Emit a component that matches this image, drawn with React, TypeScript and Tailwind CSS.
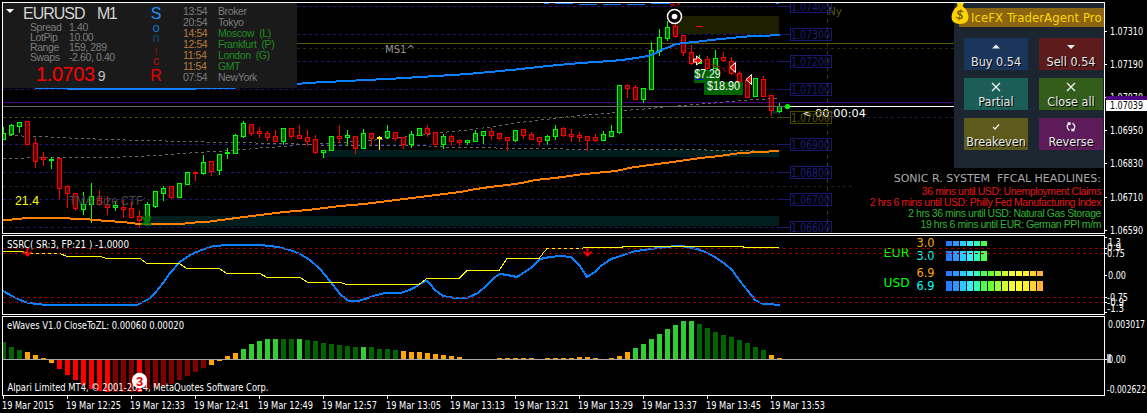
import React from 'react';

type Candle = [string, number, number, number, number]; // kind, high, bodyTop, bodyBottom, low

const STEP = 8;
const X0 = 3;

const candles: Candle[] = [
    ['g', 127, 133, 139, 139], ['g', 124, 125, 134, 135], ['g', 122, 122, 126, 132], ['r', 121, 121, 144, 144],
    ['r', 138, 143, 161, 167], ['r', 152, 157, 159, 165], ['g', 157, 159, 160, 168], ['r', 158, 158, 188, 198],
    ['r', 185, 186, 193, 207], ['r', 193, 193, 208, 210], ['g', 192, 204, 209, 214], ['g', 183, 196, 204, 222],
    ['r', 190, 198, 204, 205], ['r', 196, 204, 207, 214], ['g', 202, 205, 207, 210], ['r', 200, 207, 209, 217],
    ['r', 202, 208, 217, 217], ['r', 210, 216, 220, 227], ['g', 202, 204, 220, 220], ['g', 191, 191, 206, 207],
    ['g', 186, 188, 193, 200], ['r', 186, 186, 197, 198], ['g', 183, 183, 197, 197], ['g', 172, 172, 184, 184],
    ['r', 171, 172, 173, 180], ['g', 155, 162, 173, 174], ['r', 161, 161, 171, 175], ['g', 154, 154, 170, 174],
    ['g', 148, 152, 153, 158], ['g', 134, 135, 153, 153], ['g', 121, 123, 136, 137], ['r', 124, 124, 133, 135],
    ['r', 127, 131, 133, 137], ['r', 131, 133, 137, 140], ['r', 130, 136, 141, 141], ['g', 128, 128, 141, 144],
    ['r', 128, 128, 136, 138], ['r', 125, 135, 138, 138], ['r', 130, 137, 141, 145], ['r', 135, 139, 152, 153],
    ['g', 150, 150, 152, 157], ['g', 136, 136, 150, 150], ['r', 125, 136, 138, 142], ['g', 130, 135, 137, 145],
    ['r', 136, 136, 148, 153], ['g', 129, 133, 148, 148], ['r', 133, 133, 138, 144], ['y', 136, 137, 138, 149],
    ['g', 125, 131, 137, 138], ['r', 132, 132, 138, 140], ['r', 137, 137, 144, 148], ['g', 131, 134, 144, 147],
    ['g', 128, 128, 135, 135], ['r', 125, 128, 133, 136], ['r', 132, 132, 144, 144], ['g', 134, 136, 144, 148],
    ['r', 135, 136, 141, 145], ['r', 139, 140, 142, 145], ['g', 140, 140, 142, 144], ['g', 130, 133, 141, 141],
    ['g', 131, 131, 135, 143], ['r', 128, 131, 135, 139], ['r', 133, 133, 138, 139], ['r', 137, 137, 140, 150],
    ['g', 130, 130, 140, 141], ['r', 129, 129, 135, 138], ['r', 132, 134, 139, 139], ['r', 137, 137, 141, 145],
    ['g', 135, 136, 140, 144], ['g', 125, 129, 136, 139], ['r', 127, 128, 135, 136], ['r', 129, 134, 136, 141],
    ['r', 132, 135, 137, 141], ['r', 136, 136, 140, 150], ['r', 134, 137, 140, 141], ['g', 131, 134, 140, 140],
    ['g', 125, 131, 136, 136], ['g', 85, 85, 132, 133], ['r', 84, 85, 88, 97], ['r', 85, 87, 99, 99],
    ['g', 88, 88, 99, 102], ['g', 42, 50, 89, 89], ['g', 29, 37, 51, 55], ['g', 21, 27, 38, 40],
    ['r', 20, 26, 36, 37], ['r', 35, 35, 52, 55], ['r', 45, 52, 63, 64], ['g', 55, 60, 63, 63],
    ['r', 56, 59, 68, 69], ['g', 50, 58, 68, 68], ['r', 52, 57, 60, 61], ['r', 57, 61, 73, 74],
    ['r', 71, 73, 81, 82], ['r', 80, 80, 97, 97], ['g', 78, 78, 96, 96], ['r', 76, 79, 96, 96],
    ['r', 95, 95, 110, 115], ['g', 103, 106, 111, 112],
];

const stroke: Record<string, string> = { g: '#00ff00', r: '#ff0000', y: '#ffff00' };
const fill: Record<string, string> = { g: '#006400', r: '#640000', y: '#ffff00' };

// histogram: kind + bar end, the zero line is at 359
const waves: [string, number][] = [
    ['d', 342], ['d', 347], ['d', 350], ['o', 352], ['o', 355], ['o', 358], ['o', 363], ['r', 369],
    ['r', 375], ['r', 380], ['r', 385], ['r', 389], ['r', 391], ['r', 392], ['m', 392], ['m', 392],
    ['m', 392], ['r', 392], ['m', 390], ['m', 388], ['m', 386], ['m', 384], ['m', 380], ['m', 376],
    ['m', 372], ['m', 368], ['o', 365], ['o', 361], ['o', 356], ['o', 353], ['g', 349], ['g', 344],
    ['g', 341], ['g', 339], ['g', 339], ['d', 339], ['d', 339], ['g', 339], ['d', 340], ['d', 341],
    ['d', 343], ['d', 344], ['d', 345], ['d', 346], ['d', 347], ['g', 347], ['d', 347], ['d', 349],
    ['d', 349], ['d', 350], ['o', 351], ['o', 352], ['o', 352], ['o', 353], ['o', 354], ['o', 355],
    ['o', 356], ['o', 357], ['o', 359], ['o', 359], ['o', 359], ['o', 359], ['o', 358], ['o', 358],
    ['o', 358], ['o', 358], ['o', 358], ['o', 359], ['o', 358], ['o', 358], ['o', 358], ['o', 358],
    ['o', 357], ['o', 357], ['o', 358], ['o', 359], ['o', 358], ['o', 356], ['o', 352], ['g', 348],
    ['g', 344], ['g', 339], ['g', 334], ['g', 329], ['g', 325], ['g', 321], ['g', 321], ['d', 324],
    ['d', 328], ['d', 332], ['d', 335], ['d', 337], ['d', 340], ['d', 343], ['d', 347], ['d', 350],
    ['o', 355], ['o', 358],
];
const waveColor: Record<string, string> = { g: '#32cd32', d: '#006400', o: '#ffa500', r: '#ff0000', m: '#800000' };

const levels = [
    { y: 6, label: '1.07400' }, { y: 34, label: '1.07300' }, { y: 61, label: '1.07200' },
    { y: 89, label: '1.07100' }, { y: 117, label: '1.07000' }, { y: 144, label: '1.06900' },
    { y: 172, label: '1.06800' }, { y: 199, label: '1.06700' }, { y: 227, label: '1.06600' },
];

const priceTicks: [number, string][] = [
    [31, '1.07310'], [64, '1.07190'], [97, '1.07070'], [130, '1.06950'], [163, '1.06830'], [197, '1.06710'], [230, '1.06590'],
];

const times = ['2015', '12:25', '12:33', '12:41', '12:49', '12:57', '13:05', '13:13', '13:21', '13:29', '13:37', '13:45', '13:53'];

const clocks: [string, string, boolean][] = [
    ['13:54', 'Broker', false], ['20:54', 'Tokyo', false], ['14:54', 'Moscow  (L)', true], ['12:54', 'Frankfurt  (P)', true],
    ['11:54', 'London  (G)', true], ['11:54', 'GMT', true], ['07:54', 'NewYork', false],
];

const meter = ['#2b7bff', '#2f98ff', '#2fc8ff', '#30f0ff', '#30ffb4', '#4dff4d', '#66ff33', '#a0ff33', '#d2ff33', '#f2fa33', '#ffff33', '#fff033', '#ffd233', '#ffb133'];

const TAHOMA = '"DejaVu Sans Condensed", "DejaVu Sans", sans-serif';
const VERDANA = '"DejaVu Sans", sans-serif';
const ARIAL = '"Liberation Sans", sans-serif';

const Label = ({ x, y, w, size = 11, color = '#fff', font = TAHOMA, children }: {
    x: number; y: number; w?: number; size?: number; color?: string; font?: string; children: string;
}) => (
    <text x={x} y={y} textLength={w} lengthAdjust="spacingAndGlyphs" fontSize={size} fill={color} fontFamily={font} xmlSpace="preserve">
        {children}
    </text>
);

const Dash = ({ y, color, x2 = 1104, x1 = 3 }: { y: number; color: string; x2?: number; x1?: number }) => (
    <line x1={x1} x2={x2} y1={y + 0.5} y2={y + 0.5} stroke={color} strokeDasharray="3 3" />
);

const Curve = ({ points, color, width = 1, dash }: { points: string; color: string; width?: number; dash?: string }) => (
    <polyline points={points} fill="none" stroke={color} strokeWidth={width} strokeDasharray={dash} shapeRendering="crispEdges" />
);

const PriceChart = () => (
    <svg className="block h-full w-full" viewBox="3 3 1101 230">
        <g shapeRendering="crispEdges">
            <rect x="324" y="150" width="455" height="7" fill="#001e1e" />
            <rect x="147" y="216" width="632" height="10" fill="#001e1e" />
            <rect x="672" y="16" width="107" height="18" fill="#1e1e00" />
            <rect x="771" y="111" width="8" height="3" fill="#002828" />
            {levels.map(l => (
                <g key={l.y}>
                    <Dash y={l.y} x2={779} color={l.y === 117 ? '#4b4b00' : '#191970'} />
                    <rect x="779" y={l.y} width="12" height="1" fill={l.y === 117 ? '#4b4b00' : '#191970'} />
                </g>
            ))}
            <Dash y={117} x1={831} color="#1e1e3c" />
            <Dash y={48} color="#32230f" />
            <Dash y={186} x2={852} color="#28200f" />
            <line x1="827.5" x2="827.5" y1="3" y2="233" stroke="#3c3c0a" strokeDasharray="4 4" />
            <rect x="3" y="43" width="1101" height="1" fill="#5a5a00" />
            <rect x="3" y="102" width="1101" height="1" fill="#4b0082" />
        </g>

        <Curve dash="3 3" color="#696969" points="3,135.5 40,136.5 60,137.5 80,138.5 110,139.5 140,140.5 190,141.5 220,142.5 255,142.5 257,143.5 295,143.5 300,144.5 340,145.5 385,145.5 420,145.5 455,147.5 495,147.5 497,148.5 565,148.5 567,149.5 680,149.5 730,150.5 778,151.5" />
        <Curve dash="3 3" color="#696969" points="3,158.5 25,158.5 28,157.5 110,157.5 130,156.5 160,155.5 180,153.5 200,152.5 215,151.5 245,149.5 265,147.5 285,146.5 300,144.5 325,143.5 340,142.5 360,141.5 380,139.5 400,137.5 420,135.5 440,132.5 455,131.5 480,128.5 500,125.5 520,122.5 545,119.5 570,116.5 590,114.5 610,113.5 625,110.5 650,108.5 680,105.5 710,103.5 740,100.5 778,98.5" />

        <g shapeRendering="crispEdges">
            {candles.map(([k, hi, top, bot, lo], i) => {
                const x = X0 + i * STEP;
                return (
                    <g key={i}>
                        <rect x={x} y={hi} width="1" height={lo - hi + 1} fill={stroke[k]} />
                        <rect x={x - 2} y={top} width="5" height={bot - top + 1} fill={stroke[k]} />
                        {bot - top > 1 && <rect x={x - 1} y={top + 1} width="3" height={bot - top - 1} fill={fill[k]} />}
                    </g>
                );
            })}
            <rect x="3" y="106" width="784" height="1" fill="#696969" />
            <rect x="787" y="106" width="317" height="1" fill="#fff" />
            <rect x="35" y="88" width="193" height="1" fill="#1080ff" />
            <rect x="67" y="88" width="129" height="2" fill="#1080ff" />
            <path d="M544 3.5h5M555 3.5h18M579 4.5h18M603 4.5h18M627 4.5h18M651 3.5h22M776 3.5h3" stroke="#1080ff" />
            <path d="M670 3.5h4M671 4.5h4M677 3.5h3" stroke="#8b0000" strokeWidth="2" />
        </g>
        <Curve width={2} color="#0a80ff" points="228,88 297,84 308,83 324,82 348,81 364,80 388,79 404,78 420,77 436,76 452,75 468,74 484,72.5 500,71 516,69.5 530,68 548,66 564,64.5 580,63 596,62 610,61 622,60 636,58 648,56 655,53.5 661,50 668,47.5 675,44.5 683,43 695,42 707,40.5 720,39 732,38 740,37 755,36 770,35.5 780,34.5" />
        <Curve width={2} color="#ff8000" points="3,220 12,219.5 22,218.5 35,218 65,218 75,219 90,219.5 107,221 123,222 139,224 180,224 195,222.5 210,221.5 225,219.5 240,217.5 252,216 268,214 284,212 308,210 324,208 340,206 364,204 388,201 412,198 440,194.5 460,192 476,189 490,187 508,185 522,183 535,180 555,178 580,174.5 600,172.5 616,171 632,167.5 650,165 665,163 680,161 700,158 720,156 740,153 760,152 779,151" />

        <path d="M142 217l9 8M151 217l-9 8M146.500 215v11" stroke="#007800" strokeWidth="2.500" />
        <path d="M701 61l45 18M711 64l18 6" stroke="#b40000" strokeDasharray="3 3" fill="none" />
        <path d="M693.500 59h3v-3l5.500 4.500-5.500 4.500v-3h-3z" fill="#f00" stroke="#fff" />
        <path d="M735.500 62.500v10l-5.500-5z M751.500 74.500v10l-5.500-5z" fill="#f00" stroke="#fff" />
        <rect x="696" y="26" width="7" height="1" fill="#f00" />
        <circle cx="674.500" cy="16.500" r="7" fill="#000" stroke="#fff" strokeWidth="1.500" />
        <circle cx="674.500" cy="16.500" r="2.800" fill="#fff" />
        <rect x="694" y="70" width="26" height="13" fill="#006400" />
        <rect x="704" y="82" width="39" height="13" fill="#006400" />
        <rect x="696" y="79" width="7" height="1" fill="#00f" />
        <Label x={694.5} y={78} w={26} size={12} font={ARIAL}>$7.29</Label>
        <Label x={707} y={90} w={33} size={12} font={ARIAL}>$18.90</Label>
        <circle cx="787.500" cy="106.500" r="2.600" fill="#0f0" />

        <Label x={385} y={53} w={30} color="#969696" font={VERDANA}>MS1^</Label>
        <Label x={15} y={205} w={24} size={13} color="#ffff00" font={ARIAL}>21.4</Label>
        <Label x={69} y={205} w={77} size={13} color="#4b4b4b" font={ARIAL}>TMA Size CTF:</Label>
        <Label x={828} y={15} w={14} color="#5a5a0f" font={VERDANA}>Ny</Label>
        <Label x={802} y={117} w={64} font={VERDANA}>{'< 00:00:04'}</Label>

        {levels.map(l => (
            <g key={l.label}>
                <rect x="790.500" y={l.y - 5.5} width="41" height="12" fill="none" stroke={l.y === 117 ? '#4b4b00' : '#191970'} shapeRendering="crispEdges" />
                <Label x={791} y={l.y + 5} w={39} size={11.5} color={l.y === 117 ? '#5a5a00' : '#1d1d7c'} font={VERDANA}>{l.label}</Label>
            </g>
        ))}
    </svg>
);

const Strength = ({ name, value, y, count }: { name: string; value: string; y: number; count: number }) => (
    <g>
        <Label x={883.5} y={y + 16} w={26} size={13} color="#00ff00" font={VERDANA}>{name}</Label>
        <Label x={916.5} y={y + 6} w={18} size={12} color="#ffa500" font={VERDANA}>{value}</Label>
        <Label x={916.5} y={y + 19} w={18} size={12} color="#00ffff" font={VERDANA}>{value}</Label>
        {meter.slice(0, count).map((c, i) => (
            <g key={c}>
                <rect x={946 + i * 7} y={y} width="6" height="5" fill={c} />
                <rect x={946 + i * 7} y={y + 10} width="6" height="10" fill={c} />
            </g>
        ))}
    </g>
);

const SsrcChart = () => (
    <svg className="block h-full w-full" viewBox="3 236 1101 78">
        <Curve width={2} color="#0a80ff" points="3,291 12,296 20,300 28,303 42,304.500 138,304.500 148,299.500 155,293 163,283 170,273 180,262 190,255 200,250.500 212,246.500 225,245 260,245 278,247 290,250 300,254 310,260 320,269 330,281 340,294 348,300.500 360,300.500 368,298 375,295.500 385,293 402,292.500 412,289 420,284 427,280.500 435,290 443,296 455,298 467,298 478,293 487,285 495,277 500,274 507,275 517,277 525,272 532,267 540,259 550,257 560,256 571,257 580,266 587,277 595,272 600,266.500 611,259 622,255.500 634,251.500 650,249 662,247.500 675,246 682,246 697,249 705,252 715,257 725,264 732,270 740,281 748,291 755,300 762,303.500 780,305" />
        <Curve color="#ffff00" points="3,251.500 22,251.500 28,253.500 60,253.500 67,256.500 100,256.500 107,258.500 140,258.500 147,263.500 179,263.500 187,268.500 219,268.500 227,273.500 260,273.500 267,277.500 300,277.500 308,282.500 340,282.500 347,284.500 419,284.500 427,278.500 459,278.500 467,270.500 499,270.500 507,258.500 539,258.500 547,248.500 582,248.500 584,247.500 622,247.500 623,246.500 743,246.500 744,247.500 779,247.500" />
        <Strength name="EUR" value="3.0" y={241} count={6} />
        <Strength name="USD" value="6.9" y={271} count={14} />
        <g shapeRendering="crispEdges">
            {[248, 253, 297, 302].map(y => <Dash key={y} y={y} color="#8b0000" />)}
        </g>
        <path d="M27.500 248v8M23.500 251.500l4 4.200 4-4.200M587.500 248v8M583.500 251.500l4 4.200 4-4.200" stroke="#f00" strokeWidth="1.800" fill="none" />
        <Label x={7} y={248} w={122}>SSRC( SR:3, FP:21 ) -1.0000</Label>
    </svg>
);

const WavesChart = () => (
    <svg className="block h-full w-full" viewBox="3 317 1101 78">
        <g shapeRendering="crispEdges">
            {waves.map(([k, end], i) => (
                <rect key={i} x={X0 - 2 + i * STEP} y={Math.min(end, 359)} width="5" height={Math.abs(359 - end)} fill={waveColor[k]} />
            ))}
            <rect x="3" y="359" width="1101" height="1" fill="#a9a9a9" />
        </g>
        <Label x={7} y={329} w={177}>eWaves V1.0 CloseToZL: 0.00060 0.00020</Label>
        <Label x={7.5} y={391} w={261}>Alpari Limited MT4, © 2001-2014, MetaQuotes Software Corp.</Label>
        <circle cx="139.500" cy="380.500" r="7.700" fill="#fff" />
        <text x="139.500" y="385.500" textAnchor="middle" fontSize="13" fontWeight="bold" fill="#e00" fontFamily={ARIAL}>3</text>
    </svg>
);

const PriceAxis = () => (
    <svg className="block" width="42" height="232" viewBox="1105 2 42 232">
        {priceTicks.map(([y, t]) => (
            <g key={t}>
                <rect x="1105" y={y} width="2" height="1" fill="#fff" />
                <Label x={1110} y={y + 4} w={33} size={10.5}>{t}</Label>
            </g>
        ))}
        <rect x="1106" y="96" width="41" height="4" fill="#4b0082" />
        <rect x="1106" y="100" width="41" height="11" fill="#fff" />
        <Label x={1110} y={109.3} w={33} size={10.5} color="#000">1.07039</Label>
    </svg>
);

const SsrcAxis = () => (
    <svg className="block" width="42" height="80" viewBox="1105 235 42 80">
        <path d="M1105 237.500h2M1105 248.500h2M1105 253.500h2M1105 275.500h2M1105 297.500h2M1105 302.500h2M1105 312.500h2" stroke="#fff" />
        <Label x={1108} y={246} w={13} size={10.5}>1.3</Label>
        <Label x={1107} y={251} w={14} size={10.5}>0.9</Label>
        <Label x={1107} y={257} w={18} size={10.5}>0.75</Label>
        <Label x={1108} y={278.5} w={18} size={10.5}>0.00</Label>
        <Label x={1107} y={301} w={21} size={10.5}>-0.75</Label>
        <Label x={1107} y={306} w={17} size={10.5}>-0.9</Label>
        <Label x={1107} y={311.5} w={17} size={10.5}>-1.3</Label>
    </svg>
);

const WavesAxis = () => (
    <svg className="block" width="42" height="80" viewBox="1105 316 42 80">
        <rect x="1105" y="359" width="2" height="1" fill="#fff" />
        <rect x="1107" y="354" width="4" height="9" fill="#a9a9a9" />
        <Label x={1108} y={328} w={37} size={10.5}>0.003017</Label>
        <Label x={1108} y={362.5} w={18} size={10.5}>0.00</Label>
        <Label x={1107} y={393} w={39} size={10.5}>-0.002622</Label>
    </svg>
);

const InfoPanel = () => (
    <div className="absolute left-0 top-0 flex h-[85px] w-[294px] overflow-hidden bg-[#1a1a1a] font-['Liberation_Sans',sans-serif] text-[#7d7d7d]">
        <svg className="ml-[3px] mt-[6px] block shrink-0" width="8" height="5"><path d="M0 0h8L4 4z" fill="#fff" /></svg>
        <div className="w-[134px] shrink-0 pl-[9px]">
            <div className="flex h-[19px] gap-[12px] whitespace-nowrap text-[16px] leading-[22px] text-[#d3d3d3]">
                <span className="w-[62px] tracking-[-1px]">EURUSD</span>
                <span className="tracking-[-1.500px]">M1</span>
            </div>
            <div className="grid grid-cols-[39px_1fr] pl-[7px] text-[10.5px] leading-[10px] tracking-[-0.4px]">
                <span>Spread</span><span>1.40</span>
                <span>LotPip</span><span>10.00</span>
                <span>Range</span><span>159, 289</span>
                <span>Swaps</span><span>-2.60, 0.40</span>
            </div>
            <div className="flex items-baseline gap-[3px] pl-[13px] leading-[25px]">
                <span className="text-[20px] tracking-[-0.4px] text-[#ff0000]">1.0703</span>
                <span className="text-[14px] text-[#c0c0c0]">9</span>
            </div>
        </div>
        <div className="flex w-[14px] shrink-0 flex-col items-center pl-[2px]">
            <span className="h-[15px] text-[16px] leading-[22px] text-[#1e90ff]">S</span>
            <span className="h-[11px] text-[13px] leading-[16px] pt-[2px] text-[#1775c8]">o</span>
            <span className="h-[13px] text-[13px] leading-[16px] pt-[1px] text-[#0f4a6e]">n</span>
            <span className="h-[11px] text-[13px] leading-[16px] pt-[1px] text-[#7d1010]">i</span>
            <span className="h-[13px] text-[13px] leading-[16px] text-[#b40a0a]">c</span>
            <span className="text-[16px] leading-[20px] text-[#f00000]">R</span>
        </div>
        <div className="grid grid-cols-[35px_1fr] content-start whitespace-pre pl-[21px] pt-[3px] text-[10.5px] leading-[11px] tracking-[-0.4px]">
            {clocks.map(([t, city, open]) => (
                <React.Fragment key={city}>
                    <span className={open ? 'text-[#b87a3c]' : ''}>{t}</span>
                    <span className={open ? 'text-[#228b22]' : ''}>{city}</span>
                </React.Fragment>
            ))}
        </div>
    </div>
);

const icons: Record<string, React.ReactNode> = {
    up: <path d="M2 7.500h8L6 3.500z" fill="#eee" />,
    down: <path d="M2 4h8L6 8z" fill="#eee" />,
    close: <path d="M2 2l8 8M10 2L2 10" stroke="#eee" strokeWidth="1.400" />,
    check: <path d="M3 6l2 2 4-4.500" stroke="#eee" strokeWidth="1.300" fill="none" />,
    swap: <path d="M4.500 2Q0 5.500 4.500 9.500M2.500 2h2.500v2M7.500 9.500Q12 6 7.500 2M9.500 9.500H7v-2" stroke="#eee" strokeWidth="1.300" fill="none" />,
};

const TradeButton = ({ icon, text, color }: { icon: string; text: string; color: string }) => (
    <button className={`flex h-8 w-16 flex-col items-center whitespace-nowrap pt-[3px] text-[12.5px] leading-[17px] text-[#e8e8e8] [text-shadow:1px_1px_0_#000] ${color}`}>
        <svg className="block shrink-0" width="12" height="12">{icons[icon]}</svg>
        {text}
    </button>
);

const TraderPanel = () => (
    <div className="absolute right-0 top-0 h-[165px] w-[150px] bg-[#1b2630] pt-[5px] font-['DejaVu_Sans_Condensed','DejaVu_Sans',sans-serif]">
        <div className="ml-[5px] h-[19px] whitespace-nowrap bg-[#8b6510] pl-[12px] text-[13px] leading-[19px] tracking-[0.08px] text-[#ffd700]">
            IceFX TraderAgent Pro
        </div>
        <svg className="absolute -left-[3px] top-0" width="18" height="22">
            <path d="M6 0h7l-1.500 3q6 5 6 11q0 7-8.500 7t-8.500-7q0-6 6-11z" fill="#ffd200" />
            <text x="9" y="16" textAnchor="middle" fontSize="13" fill="#4b3c00" fontFamily={VERDANA} transform="rotate(12 9 11)">$</text>
        </svg>
        <div className="grid grid-cols-[64px_64px] gap-x-[11px] gap-y-2 pl-[10px] pt-[11px]">
            <TradeButton icon="up" text="Buy 0.54" color="bg-[#1b365d]" />
            <TradeButton icon="down" text="Sell 0.54" color="bg-[#5d1b1b]" />
            <TradeButton icon="close" text="Partial" color="bg-[#1b5d57]" />
            <TradeButton icon="close" text="Close all" color="bg-[#345d1b]" />
            <TradeButton icon="check" text="Breakeven" color="bg-[#5d5a1b]" />
            <TradeButton icon="swap" text="Reverse" color="bg-[#5d1b5a]" />
        </div>
    </div>
);

const Headlines = () => (
    <div className="absolute bottom-0 right-[3px] h-[62px] whitespace-pre text-right font-['Liberation_Sans',sans-serif] text-[10.5px] leading-[11px] tracking-[-0.43px]">
        <p className="h-[15px] font-['DejaVu_Sans',sans-serif] text-[11px] leading-[16px] tracking-normal text-[#a9a9a9]">SONIC R. SYSTEM  FFCAL HEADLINES:</p>
        <p className="text-[#e01818]">36 mins until USD: Unemployment Claims</p>
        <p className="text-[#e01818]">2 hrs 6 mins until USD: Philly Fed Manufacturing Index</p>
        <p className="text-[#32b432]">2 hrs 36 mins until USD: Natural Gas Storage</p>
        <p className="text-[#32b432]">19 hrs 6 mins until EUR: German PPI m/m</p>
    </div>
);

const App: React.FC = () => {
    return (
        <div className="flex h-[413px] w-[1147px] flex-col gap-px overflow-hidden bg-black pl-[2px] pt-[2px]">
            <section className="flex h-[232px] shrink-0">
                <div className="relative w-[1103px] shrink-0 border border-white">
                    <PriceChart />
                    <InfoPanel />
                    <TraderPanel />
                    <Headlines />
                </div>
                <PriceAxis />
            </section>
            <section className="flex h-[80px] shrink-0">
                <div className="w-[1103px] shrink-0 border border-white"><SsrcChart /></div>
                <SsrcAxis />
            </section>
            <section>
                <div className="flex h-[80px]">
                    <div className="w-[1103px] shrink-0 border border-white"><WavesChart /></div>
                    <WavesAxis />
                </div>
                <div className="flex h-[17px] pl-px">
                    {times.map(t => (
                        <div key={t} className="w-16 shrink-0">
                            <svg className="-ml-px block overflow-visible" width="64" height="17">
                                <rect x="1" y="0" width="1" height="3" fill="#fff" />
                                <Label x={0} y={13} w={t === '2015' ? 52 : 55}>{`19 Mar ${t}`}</Label>
                            </svg>
                        </div>
                    ))}
                </div>
            </section>
        </div>
    );
};

export default App;
